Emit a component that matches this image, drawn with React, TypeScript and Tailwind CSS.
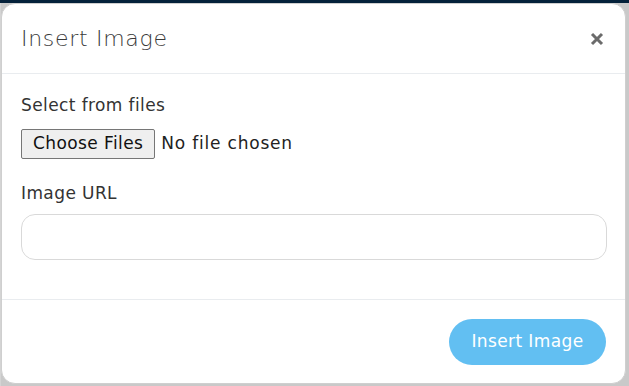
import React from "react";

export default function App() {
  const font = { fontFamily: '"DejaVu Sans", "Open Sans", sans-serif' };
  return (
    <div className="w-[629px] h-[386px] bg-[#c9c9c9] overflow-hidden flex flex-col" style={font}>
      <div className="h-[3px] bg-[#04213a] shrink-0" />
      <div className="flex flex-1">
        <div className="w-[1px] bg-[#d4d4d4]" />
        <div className="w-[625px] h-[381px] shrink-0 bg-white rounded-[14px] border border-[#cfcfcf] flex flex-col overflow-hidden">
          <div className="h-[70px] flex items-center justify-between pl-[19px] pr-[21px] border-b border-[#e9ecef] shrink-0">
            <div className="text-[22px] tracking-[0.7px] text-[#3a3a3a] font-light">Insert Image</div>
            <svg width="14" height="14" viewBox="0 0 14 14">
              <path d="M2 2 L12 12 M12 2 L2 12" stroke="#6b6b6b" strokeWidth="3" strokeLinecap="butt" />
            </svg>
          </div>
          <div className="flex flex-col pl-[19px] pr-[18px] pt-[19px] pb-[39px] border-b border-[#e9ecef]">
            <div className="text-[17px] tracking-[0.4px] leading-[24px] text-[#333]">Select from files</div>
            <div className="flex items-center mt-[12px] h-[30px]">
              <div className="h-[30px] px-[11px] flex items-center bg-[#efefef] border border-[#767676] rounded-[2px] text-[17px] tracking-[0.4px] text-[#111]">
                Choose Files
              </div>
              <span className="ml-[6px] text-[17px] tracking-[0.8px] text-[#222]">No file chosen</span>
            </div>
            <div className="text-[17px] tracking-[0.4px] leading-[24px] text-[#333] mt-[22px]">Image URL</div>
            <div className="mt-[9px] h-[46px] w-full rounded-[14px] border border-[#d9d9d9]" />
          </div>
          <div className="flex justify-end px-[19px] pt-[19px]">
            <div className="h-[46px] w-[157px] rounded-full bg-[#62bff2] text-white text-[17px] tracking-[0.4px] flex items-center justify-center">
              Insert Image
            </div>
          </div>
        </div>
        <div className="flex-1 bg-[#c9c9c9]" />
      </div>
    </div>
  );
}
